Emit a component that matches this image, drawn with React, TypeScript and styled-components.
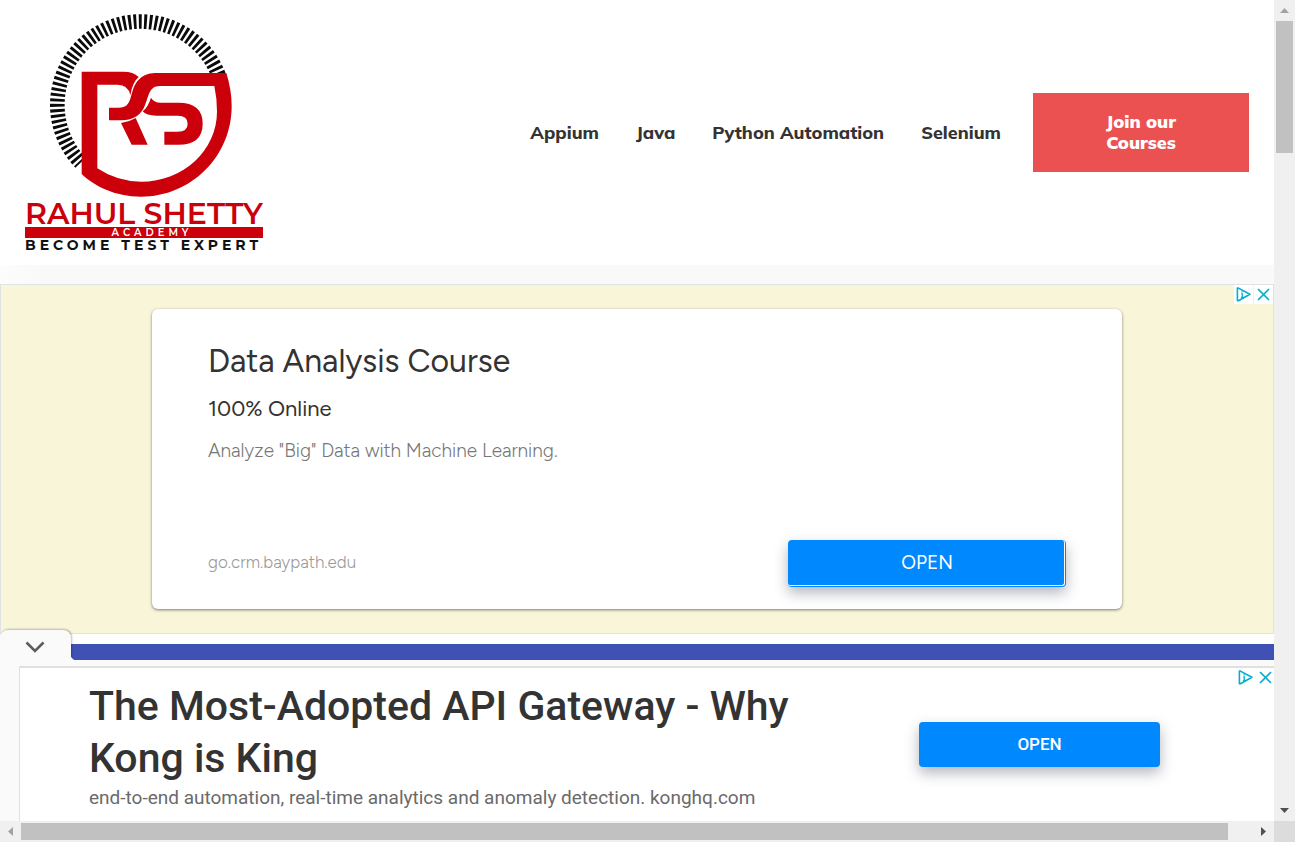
import React from "react";
import styled, { createGlobalStyle } from "styled-components";

const GlobalStyle = createGlobalStyle`
  *, *::before, *::after { box-sizing: border-box; }
  body { margin: 0; background: #fff; color: #333; font-family: "Google Sans", "Product Sans", Figtree, Outfit, Lato, sans-serif; }
  h2, h3, p, ul { margin: 0; padding: 0; }
  button { border: 0; padding: 0; background: none; font: inherit; color: inherit; cursor: pointer; }
  a { color: inherit; text-decoration: none; }
  svg { display: block; }
`;

const Frame = styled.div`
  display: grid;
  grid-template-columns: minmax(0, 1fr) 21px;
  grid-template-rows: minmax(0, 1fr) 21px;
  height: 100vh;
`;

const Viewport = styled.div`
  display: flex;
  flex-direction: column;
  overflow: hidden;
`;

const Page = styled.main`
  flex: 1;
  min-height: 0;
  display: flex;
  flex-direction: column;
  overflow: hidden;
`;

/* ---------- header ---------- */

const Header = styled.header`
  display: flex;
  align-items: center;
  justify-content: space-between;
  flex: none;
  padding: 0 25px;
  background: #fff;
`;

const Logo = styled.a`
  display: flex;
  flex-direction: column;
  width: 238px;
  padding-bottom: 12px;
  font-family: Montserrat, Lato, sans-serif;
  font-weight: 600;
  white-space: nowrap;
`;

const LogoName = styled.span`
  color: #cb000b;
  font-size: 30px;
  line-height: 27px;
`;

const LogoBar = styled.span`
  padding: 1px 0 0 16px;
  background: #cb000b;
  color: #fff;
  font-size: 10px;
  line-height: 10px;
  letter-spacing: 4px;
  text-align: center;
`;

const LogoTagline = styled.span`
  color: #111;
  font-size: 14px;
  font-weight: 700;
  line-height: 15px;
  letter-spacing: 4px;
`;

const Nav = styled.nav`
  display: flex;
  align-items: center;
  gap: 32px;
  font: 800 18px/21px Muli, Mulish, "Nunito Sans", Nunito, "Open Sans", sans-serif;
`;

const NavList = styled.ul`
  display: flex;
  gap: 37px;
  list-style: none;
`;

const JoinButton = styled.a`
  width: 216px;
  padding: 18px 64px 19px;
  background: #eb5151;
  color: #fff;
  font-weight: 900;
  text-align: center;
`;

const HeaderShade = styled.div`
  flex: none;
  height: 19px;
  background: linear-gradient(90deg, #fdfdfd, #f9f9f9 40px);
`;

/* ---------- ads ---------- */

const BannerAd = styled.section`
  position: relative;
  flex: none;
  padding: 24px;
  border: 1px solid #e0e3e6;
  background: #f9f5d9;
`;

const Card = styled.article`
  display: flex;
  flex-direction: column;
  max-width: 970px;
  height: 300px;
  margin: 0 auto;
  padding: 32px 56px 22px;
  border-radius: 6px;
  background: #fff;
  box-shadow: 0 1px 3px rgba(0, 0, 0, 0.5);
`;

const CardTitle = styled.h2`
  font-size: 32px;
  font-weight: 400;
  line-height: 40px;
`;

const CardSubtitle = styled.h3`
  margin-top: 13px;
  font-size: 22px;
  font-weight: 400;
  line-height: 30px;
`;

const CardText = styled.p`
  margin-top: 15px;
  color: #777;
  font-size: 19px;
  font-weight: 300;
  line-height: 24px;
`;

const CardFooter = styled.div`
  display: flex;
  align-items: center;
  justify-content: space-between;
  margin-top: auto;
`;

const CardUrl = styled.a`
  padding-bottom: 3px;
  color: #999;
  font-size: 17px;
  font-weight: 300;
`;

const OpenButton = styled.button<{ $wide?: boolean }>`
  position: relative;
  flex: none;
  width: ${(p) => (p.$wide ? 278 : 241)}px;
  height: ${(p) => (p.$wide ? 47 : 45)}px;
  padding-bottom: 2px;
  border-radius: 4px;
  background: #0088ff;
  color: #fff;
  font-size: ${(p) => (p.$wide ? 19 : 17)}px;
  font-weight: ${(p) => (p.$wide ? 400 : 500)};
  box-shadow: 0 6px 14px rgba(40, 45, 70, 0.35);
  ${(p) =>
    p.$wide &&
    `&::after {
      content: "";
      position: absolute;
      inset: 0 1px 1px 0;
      border: solid #fff;
      border-width: 0 1px 1px 0;
      border-radius: 3px;
    }`}
`;

const AdControls = styled.div<{ $filled?: boolean }>`
  position: absolute;
  top: 0;
  right: ${(p) => (p.$filled ? 0 : -1)}px;
  display: flex;
  gap: 1px;

  button {
    display: grid;
    place-items: center;
    width: 19px;
    height: 19px;
    background: ${(p) => (p.$filled ? "#fff" : "transparent")};
  }
`;

const BlueBar = styled.div`
  flex: 1;
  min-height: 16px;
  margin-top: 10px;
  background: #3f51b5;
`;

const StickyAd = styled.aside`
  position: relative;
  flex: none;
  padding: 6px 0 0 19px;
  background: #fafafa;
`;

const CollapseTab = styled.button`
  position: absolute;
  top: -30px;
  left: 0;
  display: grid;
  place-items: center;
  width: 71px;
  height: 37px;
  padding-right: 1px;
  padding-bottom: 3px;
  border-radius: 8px 8px 0 0;
  background: #fafafa;
  box-shadow: 1px -1px 2px rgba(0, 0, 0, 0.25);
  clip-path: inset(-4px -8px 7px 0);

  &::after {
    content: "";
    position: absolute;
    left: 100%;
    bottom: 7px;
    width: 6px;
    height: 6px;
    background: radial-gradient(circle at top right, transparent 6px, #fafafa 7px);
  }
`;

const StickyBody = styled.div`
  position: relative;
  display: flex;
  align-items: flex-start;
  justify-content: space-between;
  min-height: 155px;
  padding: 12px 114px 11px 69px;
  border: solid #e0e0e0;
  border-width: 2px 0 0 1px;
  background: #fff;
  font-family: Roboto, sans-serif;

  > ${OpenButton} { margin-top: 42px; }
`;

const StickyCopy = styled.div`
  max-width: 740px;
`;

const StickyTitle = styled.h2`
  font-size: 41px;
  font-weight: 500;
  line-height: 52px;
`;

const StickyText = styled.p`
  margin-top: 2px;
  color: #6a6a6a;
  font-size: 19px;
  line-height: 24px;
`;

/* ---------- scroll bars ---------- */

const ScrollBar = styled.div<{ $vertical?: boolean }>`
  display: flex;
  flex-direction: ${(p) => (p.$vertical ? "column" : "row")};
  padding: ${(p) => (p.$vertical ? "0 2px" : "2px 0")};
  background: #f0f0f0;
`;

const ScrollArrow = styled.button`
  flex: none;
  display: grid;
  place-items: center;
  min-width: 17px;
  min-height: 17px;
  flex-basis: 21px;
`;

const ScrollTrack = styled.div<{ $vertical?: boolean }>`
  flex: 1;
  display: flex;
  flex-direction: ${(p) => (p.$vertical ? "column" : "row")};
`;

const ScrollThumb = styled.div<{ $size: string }>`
  flex: 0 0 ${(p) => p.$size};
  background: #c1c1c1;
`;

const ScrollCorner = styled.div`
  background: #dcdcdc;
`;

const LogoMark = () => (
  <svg width="238" height="200" viewBox="45 0 714 600" aria-hidden="true">
    <path
      d="M212 488 A250 250 0 1 1 630 238"
      fill="none"
      stroke="#0b0b0b"
      strokeWidth="44"
      strokeDasharray="8.5 7.2"
      strokeDashoffset="2.7"
    />
    <g fill="#cb000b">
      <path d="M215 215 H340 Q370 215 386 231 Q367 247 361 286 Q356 254 322 254 H262 V505 Q322 545 393 545 C520 545 621 450 621 335 Q621 295 613 258 H450 C414 258 417 292 401 325 Q381 361 335 361 H297 V323 H326 C372 323 355 277 383 242 Q402 219 436 219 H649 Q665 270 665 318 C665 470 543 590 393 590 C315 590 252 558 215 522 Z" />
      <path d="M333 369 Q357 366 377 354 L413 434 H365 Z" />
      <path d="M423 293 Q432 308 452 308 H505 Q578 308 578 371 Q578 434 505 434 H463 V395 H503 Q533 395 533 371 Q533 347 503 347 H438 Q410 347 398 334 Q414 322 423 293 Z" />
    </g>
  </svg>
);

const AdIcons = ({ filled }: { filled?: boolean }) => (
  <AdControls $filled={filled}>
    <button aria-label="Ad choices">
      <svg width="15" height="15" viewBox="0 0 16 16" fill="none" stroke="#00aecd">
        <path d="M1.5 1.2 H2.6 L14.8 7.8 L2.6 14.6 H1.5 Z" strokeWidth="1.7" strokeLinejoin="round" />
        <path d="M6.5 4.4 V5.8 M5.5 7.4 H6.7 V11 M5.3 11 H8.3" strokeWidth="1.3" />
      </svg>
    </button>
    <button aria-label="Close ad">
      <svg width="13" height="13" viewBox="0 0 13 13" stroke="#00aecd" strokeWidth="1.7">
        <path d="M1 1 L12 12 M12 1 L1 12" />
      </svg>
    </button>
  </AdControls>
);

const Arrow = ({ points, dark }: { points: string; dark?: boolean }) => (
  <svg width="9" height="9" viewBox="0 0 9 9" aria-hidden="true">
    <polygon points={points} fill={dark ? "#505050" : "#a3a3a3"} />
  </svg>
);

const links = ["Appium", "Java", "Python Automation", "Selenium"];

export default function App() {
  return (
    <Frame>
      <GlobalStyle />
      <Viewport>
        <Page>
          <Header>
            <Logo href="#">
              <LogoMark />
              <LogoName>RAHUL SHETTY</LogoName>
              <LogoBar>ACADEMY</LogoBar>
              <LogoTagline>BECOME TEST EXPERT</LogoTagline>
            </Logo>
            <Nav>
              <NavList>
                {links.map((label) => (
                  <li key={label}>
                    <a href="#">{label}</a>
                  </li>
                ))}
              </NavList>
              <JoinButton href="#">Join our Courses</JoinButton>
            </Nav>
          </Header>
          <HeaderShade />
          <BannerAd>
            <Card>
              <CardTitle>Data Analysis Course</CardTitle>
              <CardSubtitle>100% Online</CardSubtitle>
              <CardText>Analyze "Big" Data with Machine Learning.</CardText>
              <CardFooter>
                <CardUrl href="#">go.crm.baypath.edu</CardUrl>
                <OpenButton $wide>OPEN</OpenButton>
              </CardFooter>
            </Card>
            <AdIcons filled />
          </BannerAd>
          <BlueBar />
        </Page>
        <StickyAd>
          <CollapseTab aria-label="Collapse ad">
            <svg width="20" height="12" viewBox="0 0 20 12" fill="none" stroke="#5c5c5c" strokeWidth="2.6">
              <path d="M1.5 1.5 L10 10 L18.5 1.5" />
            </svg>
          </CollapseTab>
          <StickyBody>
            <StickyCopy>
              <StickyTitle>The Most-Adopted API Gateway - Why Kong is King</StickyTitle>
              <StickyText>end-to-end automation, real-time analytics and anomaly detection. konghq.com</StickyText>
            </StickyCopy>
            <OpenButton>OPEN</OpenButton>
            <AdIcons />
          </StickyBody>
        </StickyAd>
      </Viewport>
      <ScrollBar $vertical>
        <ScrollArrow aria-label="Scroll up">
          <Arrow points="0,7 4.5,2 9,7" />
        </ScrollArrow>
        <ScrollTrack $vertical>
          <ScrollThumb $size="17%" />
        </ScrollTrack>
        <ScrollArrow aria-label="Scroll down">
          <Arrow points="0,2 9,2 4.5,7" dark />
        </ScrollArrow>
      </ScrollBar>
      <ScrollBar>
        <ScrollArrow aria-label="Scroll left">
          <Arrow points="7,0 7,9 2,4.5" />
        </ScrollArrow>
        <ScrollTrack>
          <ScrollThumb $size="98%" />
        </ScrollTrack>
        <ScrollArrow aria-label="Scroll right">
          <Arrow points="2,0 7,4.5 2,9" dark />
        </ScrollArrow>
      </ScrollBar>
      <ScrollCorner />
    </Frame>
  );
}
